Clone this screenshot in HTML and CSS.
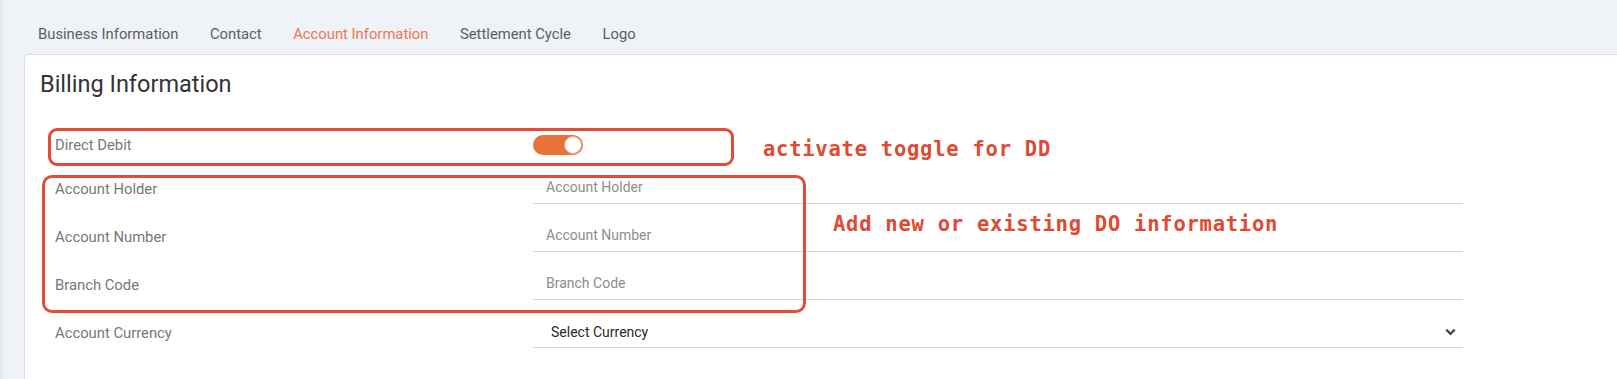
FILE: index.html
```html
<!DOCTYPE html>
<html lang="en">
<head>
<meta charset="utf-8">
<title>Billing Information</title>
<link rel="stylesheet" href="styles.css">
</head>
<body>
<div class="page">
  <nav class="tabs">
    <a class="tab">Business Information</a>
    <a class="tab">Contact</a>
    <a class="tab tab-active">Account Information</a>
    <a class="tab">Settlement Cycle</a>
    <a class="tab">Logo</a>
  </nav>
  <section class="card">
    <h2 class="card-title">Billing Information</h2>
    <div class="form">
      <div class="row row-toggle">
        <label class="label">Direct Debit</label>
        <div class="field"><span class="toggle"><span class="knob"></span></span></div>
      </div>
      <div class="row">
        <label class="label">Account Holder</label>
        <div class="field"><input class="input" placeholder="Account Holder"></div>
      </div>
      <div class="row">
        <label class="label">Account Number</label>
        <div class="field"><input class="input" placeholder="Account Number"></div>
      </div>
      <div class="row">
        <label class="label">Branch Code</label>
        <div class="field"><input class="input" placeholder="Branch Code"></div>
      </div>
      <div class="row">
        <label class="label">Account Currency</label>
        <div class="field select">
          <span class="select-text">Select Currency</span>
          <svg class="chevron" width="11" height="8" viewBox="0 0 11 8"><path d="M1.3 1.6 L5.5 5.8 L9.7 1.6" fill="none" stroke="#4a4a4a" stroke-width="2.3"/></svg>
        </div>
      </div>
    </div>
    <div class="mark mark-toggle"></div>
    <div class="mark mark-fields"></div>
    <p class="note note-toggle">activate toggle for DD</p>
    <p class="note note-fields">Add new or existing DO information</p>
  </section>
</div>
</body>
</html>
```
FILE: styles.css
```css
html, body {
  margin: 0;
  padding: 0;
}
body {
  background: #eff2f7;
  font-family: Roboto, "Noto Sans", sans-serif;
  width: 1617px;
  height: 379px;
  overflow: hidden;
}
.page {
  display: flex;
  flex-direction: column;
  height: 379px;
  border-left: 3px solid #e6e9ee;
  box-sizing: border-box;
}
.tabs {
  display: flex;
  gap: 31.5px;
  padding: 24px 0 10px 35px;
  line-height: 20px;
  height: 20px;
}
.tab {
  font-size: 14.8px;
  color: #5e5e5e;
  white-space: nowrap;
}
.tab-active {
  color: #ef7651;
}
.card {
  position: relative;
  flex: 1;
  margin-left: 21px;
  background: #fff;
  border-top: 1px solid #dcdfe4;
  border-left: 1px solid #dcdfe4;
  border-top-left-radius: 4px;
}
.card-title {
  margin: 0;
  padding: 15px 0 0 15px;
  font-size: 23.5px;
  font-weight: 400;
  line-height: 28px;
  color: #333;
}
.form {
  display: flex;
  flex-direction: column;
  gap: 14px;
  padding: 30px 0 0 30px;
}
.row {
  display: grid;
  grid-template-columns: 478px 930px;
  height: 34px;
  align-items: center;
}
.row-toggle {
  margin-bottom: -6px;
}
.label {
  font-size: 14.8px;
  color: #777;
  padding-top: 3px;
}
.row-toggle .label {
  padding-top: 0;
}
.field {
  height: 34px;
  display: flex;
  align-items: center;
}
.input {
  width: 100%;
  height: 34px;
  box-sizing: border-box;
  border: none;
  border-bottom: 1px solid #d5d5d5;
  padding: 0 0 0 13px;
  font-family: Roboto, "Noto Sans", sans-serif;
  font-size: 14px;
  outline: none;
  background: transparent;
}
.input::placeholder {
  color: #8d8d8d;
}
.select {
  box-sizing: border-box;
  border-bottom: 1px solid #d5d5d5;
  justify-content: space-between;
  padding: 2px 7px 0 18px;
}
.select-text {
  font-size: 14px;
  color: #2a2a2a;
}
.toggle {
  display: flex;
  justify-content: flex-end;
  align-items: center;
  width: 50px;
  height: 20px;
  border-radius: 10px;
  background: #e8733a;
  box-sizing: border-box;
  padding: 1px;
}
.knob {
  width: 18px;
  height: 18px;
  border-radius: 50%;
  background: #fff;
  box-sizing: border-box;
  border: 1px solid #f2a27a;
}
.mark {
  position: absolute;
  border: 3px solid #e34d37;
  box-sizing: border-box;
}
.mark-toggle {
  left: 23px;
  top: 73px;
  width: 686px;
  height: 38px;
  border-radius: 9px;
}
.mark-fields {
  left: 17px;
  top: 120px;
  width: 764px;
  height: 138px;
  border-radius: 10px;
}
.note {
  position: absolute;
  margin: 0;
  font-family: "DejaVu Sans Mono", "Liberation Mono", monospace;
  font-weight: 700;
  font-size: 20.5px;
  letter-spacing: 0.75px;
  line-height: 26px;
  color: #e04a32;
  white-space: nowrap;
}
.note-toggle {
  left: 738px;
  top: 81px;
}
.note-fields {
  left: 808px;
  top: 156px;
}
```
